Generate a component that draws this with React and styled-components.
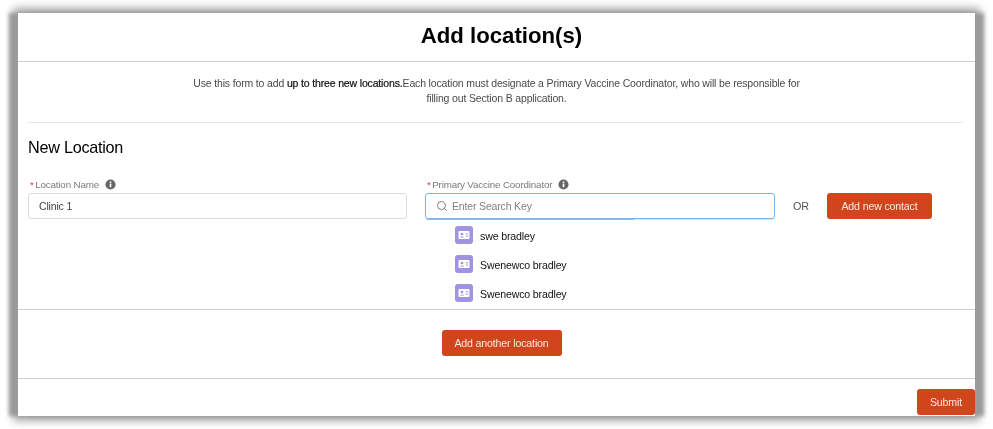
import React from 'react';
import styled, { createGlobalStyle } from 'styled-components';
import { Search } from 'lucide-react';

const GlobalStyle = createGlobalStyle`
  html, body {
    margin: 0;
    padding: 0;
    background: #fff;
  }
  body {
    font-family: "Liberation Sans", Arial, sans-serif;
    color: #3e3e3c;
  }
`;

const contacts = ['swe bradley', 'Swenewco bradley', 'Swenewco bradley'];

function InfoIcon() {
  return (
    <InfoSvg viewBox="0 0 12 12">
      <circle cx="6" cy="6" r="5.5" fill="#666" />
      <rect x="5.1" y="5" width="1.8" height="4" fill="#fff" />
      <rect x="5.1" y="2.7" width="1.8" height="1.6" fill="#fff" />
    </InfoSvg>
  );
}

function ContactIcon() {
  return (
    <ContactBadge>
      <svg viewBox="0 0 18 18" width="18" height="18">
        <rect x="3.5" y="5" width="11" height="8" rx="1" fill="#fff" />
        <circle cx="7" cy="8" r="1.3" fill="#a094e2" />
        <path d="M5 11.4c0-1.3 4-1.3 4 0z" fill="#a094e2" />
        <rect x="10.5" y="7.4" width="2.8" height="0.9" fill="#a094e2" />
        <rect x="10.5" y="9.6" width="2.8" height="0.9" fill="#a094e2" />
      </svg>
    </ContactBadge>
  );
}

function App() {
  return (
    <Page>
      <GlobalStyle />
      <Panel>
        <Header>Add location(s)</Header>
        <Intro>
          Use this form to add <strong>up to three new locations.</strong>Each location must designate a Primary Vaccine Coordinator, who will be responsible for
          <br />
          filling out Section B application.
        </Intro>
        <Divider />
        <SectionTitle>New Location</SectionTitle>
        <FieldRow>
          <NameField>
            <Label><Req>*</Req>Location Name<InfoIcon /></Label>
            <TextBox>Clinic 1</TextBox>
          </NameField>
          <CoordField>
            <Label><Req>*</Req>Primary Vaccine Coordinator<InfoIcon /></Label>
            <SearchBox>
              <Search size={12} color="#808080" strokeWidth={2} />
              <Placeholder>Enter Search Key</Placeholder>
            </SearchBox>
          </CoordField>
          <OrText>OR</OrText>
          <ContactButton>Add new contact</ContactButton>
        </FieldRow>
        <ResultList>
          {contacts.map((name, i) => (
            <ResultItem key={i}>
              <ContactIcon />
              <span>{name}</span>
            </ResultItem>
          ))}
        </ResultList>
        <AddSection>
          <Button>Add another location</Button>
        </AddSection>
        <Footer>
          <SubmitButton>Submit</SubmitButton>
        </Footer>
      </Panel>
    </Page>
  );
}

export default App;

const Page = styled.div`
  padding: 13px 18px;
`;

const Panel = styled.div`
  background: #fff;
  height: 403px;
  box-sizing: border-box;
  box-shadow: -9px 0 4px #9a9a9a, 9px 0 4px #9a9a9a, 0 0 8px 5px rgba(0, 0, 0, 0.35);
  filter: blur(0.4px);
`;

const Header = styled.h1`
  margin: 0;
  height: 45px;
  padding: 0 0 3px 10px;
  border-bottom: 1px solid #d0d0d0;
  font-size: 22.2px;
  font-weight: 700;
  color: #000;
  display: flex;
  align-items: center;
  justify-content: center;
`;

const Intro = styled.p`
  margin: 0;
  padding-top: 14px;
  height: 46px;
  text-align: center;
  font-size: 10.5px;
  letter-spacing: -0.155px;
  line-height: 15px;
  color: #4a4a4a;
  strong {
    color: #111;
    font-weight: 400;
    -webkit-text-stroke: 0.2px #111;
  }
`;

const Divider = styled.div`
  margin: 0 12px 0 10px;
  border-top: 1px solid #e8e8e8;
`;

const SectionTitle = styled.h2`
  margin: 0;
  padding: 13px 0 0 10px;
  height: 40px;
  box-sizing: border-box;
  font-size: 16.2px;
  letter-spacing: -0.25px;
  line-height: 22px;
  font-weight: 400;
  color: #000;
`;

const FieldRow = styled.div`
  display: flex;
  align-items: flex-end;
  padding: 14px 0 0 10px;
`;

const NameField = styled.div`
  width: 379px;
  margin-right: 18px;
`;

const CoordField = styled.div`
  width: 350px;
`;

const Label = styled.div`
  display: flex;
  align-items: center;
  height: 14px;
  margin-bottom: 2px;
  font-size: 9.8px;
  letter-spacing: -0.16px;
  color: #7a7a7a;
`;

const Req = styled.span`
  color: #c23934;
  margin: 0 1.5px 0 2px;
`;

const InfoSvg = styled.svg`
  width: 11px;
  height: 11px;
  margin-left: 6px;
`;

const TextBox = styled.div`
  height: 26px;
  box-sizing: border-box;
  border: 1px solid #dddbda;
  border-radius: 3px;
  padding: 0 10px;
  display: flex;
  align-items: center;
  font-size: 10.5px;
  letter-spacing: -0.16px;
  color: #444;
`;

const SearchBox = styled(TextBox)`
  position: relative;
  border-color: #7fb3ee;
  gap: 4px;
  box-shadow: 0 1px 0 #f6d7d4;
  &::after {
    content: '';
    position: absolute;
    left: 1px;
    width: 207px;
    bottom: -2px;
    height: 1px;
    background: #8fbcf0;
  }
`;

const Placeholder = styled.span`
  color: #808080;
`;

const OrText = styled.div`
  width: 52px;
  height: 26px;
  line-height: 26px;
  text-align: center;
  font-size: 10.8px;
  letter-spacing: -0.2px;
  color: #555;
`;

const Button = styled.button`
  height: 26px;
  width: 120px;
  padding: 0;
  border: 0;
  border-radius: 3px;
  background: #d1451d;
  color: #fbe6df;
  font-family: inherit;
  font-size: 10.6px;
  letter-spacing: -0.15px;
`;

const ContactButton = styled(Button)`
  width: 105px;
`;

const SubmitButton = styled(Button)`
  width: 58px;
`;

const ResultList = styled.div`
  padding: 1px 0 0 437px;
  height: 90px;
  box-sizing: border-box;
`;

const ResultItem = styled.div`
  height: 29px;
  display: flex;
  align-items: center;
  gap: 7px;
  font-size: 10.6px;
  letter-spacing: -0.15px;
  color: #111;
  span:last-child {
    padding-top: 2px;
  }
`;

const ContactBadge = styled.span`
  width: 18px;
  height: 18px;
  border-radius: 3px;
  background: #a094e2;
  display: flex;
`;

const AddSection = styled.div`
  height: 68px;
  border-top: 1px solid #d0d0d0;
  border-bottom: 1px solid #d0d0d0;
  display: flex;
  justify-content: center;
  align-items: center;
  padding-left: 10px;
  & > button {
    margin-bottom: 2px;
  }
`;

const Footer = styled.div`
  display: flex;
  justify-content: flex-end;
  padding-top: 10px;
`;
